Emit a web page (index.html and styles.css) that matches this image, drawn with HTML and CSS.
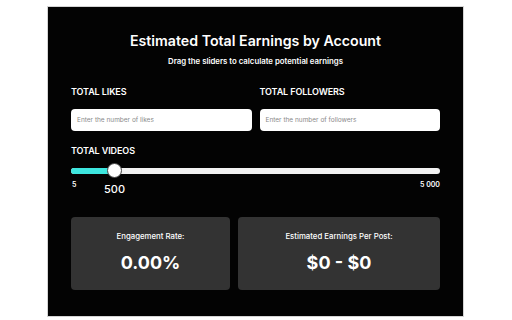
FILE: index.html
```html
<!DOCTYPE html>
<html lang="en">
<head>
<meta charset="utf-8">
<title>Estimated Total Earnings by Account</title>
<link rel="stylesheet" href="styles.css">
</head>
<body>
<div class="panel">
  <h1 class="title">Estimated Total Earnings by Account</h1>
  <p class="subtitle">Drag the sliders to calculate potential earnings</p>

  <div class="inputs">
    <div class="field">
      <label class="label">TOTAL LIKES</label>
      <div class="input">Enter the number of likes</div>
    </div>
    <div class="field">
      <label class="label">TOTAL FOLLOWERS</label>
      <div class="input">Enter the number of followers</div>
    </div>
  </div>

  <div class="videos">
    <label class="label">TOTAL VIDEOS</label>
    <div class="slider">
      <div class="track"></div>
      <div class="fill" style="width: 43px"></div>
      <div class="thumb" style="left: 36px"></div>
    </div>
    <div class="range">
      <span class="min">5</span>
      <span class="current" style="left: 33px">500</span>
      <span class="max">5 000</span>
    </div>
  </div>

  <div class="cards">
    <div class="card">
      <div class="card-label">Engagement Rate:</div>
      <div class="card-value">0.00%</div>
    </div>
    <div class="card">
      <div class="card-label">Estimated Earnings Per Post:</div>
      <div class="card-value">$0 - $0</div>
    </div>
  </div>
</div>
</body>
</html>
```

FILE: styles.css
```css
html, body {
  margin: 0;
  padding: 0;
  background: #ffffff;
}

body {
  font-family: Inter, "Liberation Sans", sans-serif;
  color: #ffffff;
}

.panel {
  box-sizing: border-box;
  width: 417px;
  height: 311px;
  margin: 6px 0 0 47px;
  background: #030303;
  border: 1px solid #d4d4d4;
  padding: 24px 23px 0 23px;
}

.title {
  margin: 0;
  font-size: 14.2px;
  line-height: 20px;
  font-weight: 600;
  text-align: center;
}

.subtitle {
  margin: 4px 0 0;
  font-size: 7.8px;
  line-height: 12px;
  font-weight: 600;
  text-align: center;
}

.inputs {
  display: grid;
  grid-template-columns: 1fr 1fr;
  gap: 8px;
  margin-top: 19px;
}

.field {
  display: flex;
  flex-direction: column;
}

.label {
  display: block;
  font-size: 9px;
  line-height: 12px;
  font-weight: 600;
  letter-spacing: -0.1px;
}

.input {
  margin-top: 11px;
  height: 22px;
  background: #ffffff;
  border-radius: 4px;
  color: #8a8a8a;
  font-size: 6.5px;
  line-height: 22px;
  padding-left: 6px;
}

.videos {
  margin-top: 14px;
}

.slider {
  position: relative;
  height: 16px;
  margin-top: 6px;
}

.track {
  position: absolute;
  left: 0;
  right: 0;
  top: 5px;
  height: 6px;
  border-radius: 3px;
  background: #f2f2f2;
}

.fill {
  position: absolute;
  left: 0;
  top: 5px;
  height: 6px;
  border-radius: 3px 0 0 3px;
  background: #3de6df;
}

.thumb {
  position: absolute;
  top: 0;
  box-sizing: border-box;
  width: 15px;
  height: 15px;
  border-radius: 50%;
  background: #ffffff;
  border: 1.5px solid #444444;
}

.range {
  position: relative;
  display: flex;
  justify-content: space-between;
  height: 18px;
  font-size: 7px;
  line-height: 10px;
  font-weight: 600;
  margin-top: 1px;
}

.min {
  padding-left: 1px;
}

.current {
  position: absolute;
  top: 2px;
  font-size: 11px;
  line-height: 14px;
  font-weight: 500;
}

.cards {
  display: grid;
  grid-template-columns: 159px 1fr;
  gap: 8px;
  margin-top: 19px;
}

.card {
  height: 73px;
  background: #333333;
  border-radius: 4px;
  display: flex;
  flex-direction: column;
  align-items: center;
  padding-top: 13px;
  box-sizing: border-box;
}

.card-label {
  font-size: 7.8px;
  line-height: 12px;
  font-weight: 500;
}

.card-value {
  margin-top: 10px;
  font-size: 18px;
  line-height: 22px;
  font-weight: 700;
}
```
